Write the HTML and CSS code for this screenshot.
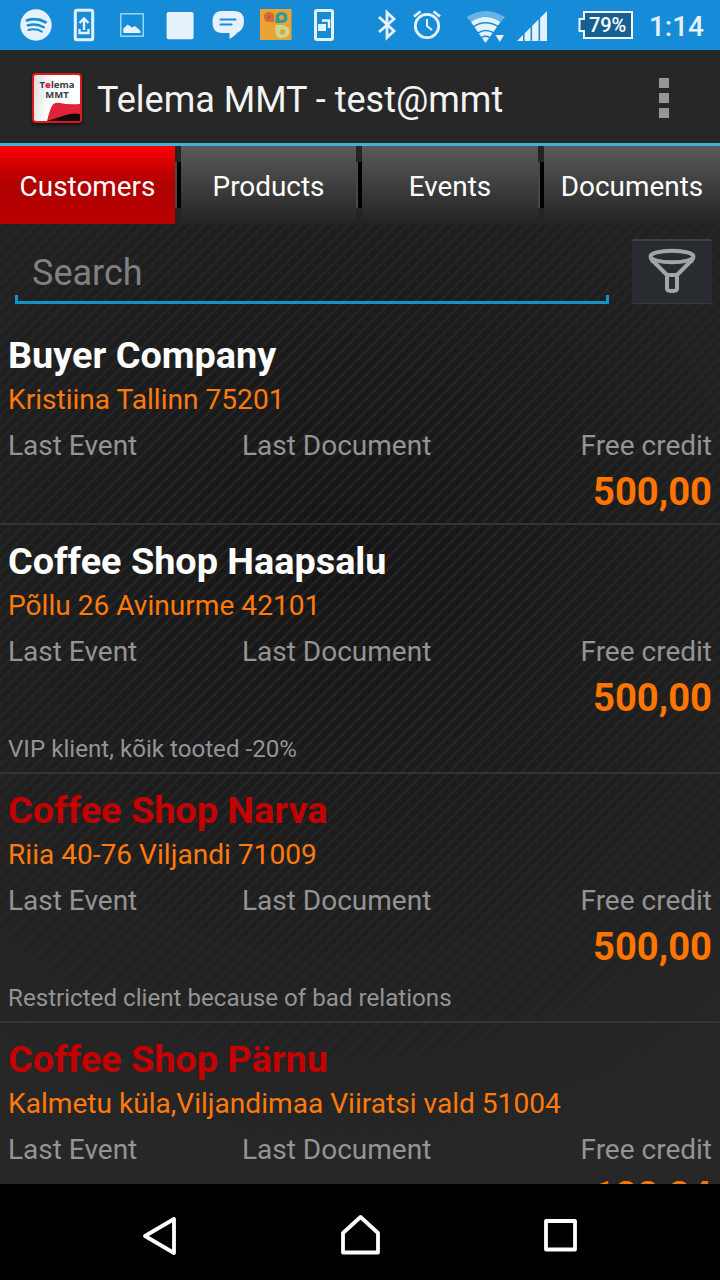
FILE: index.html
```html
<!DOCTYPE html>
<html lang="en">
<head>
  <meta charset="UTF-8" />
  <meta name="viewport" content="width=device-width, initial-scale=1.0" />
  <title>Telema MMT</title>
  <link rel="stylesheet" href="styles.css">
</head>
<body>
  <div class="statusbar">
    <div class="notifications">
      <svg viewBox="0 0 48 50"><circle cx="24" cy="25" r="15.7" fill="#e6f2fb"/><g fill="none" stroke="#168cd8" stroke-linecap="round"><path d="M15 20.3q10-3 18.5 2" stroke-width="2.8"/><path d="M15.7 25.3q9-2.4 16 2" stroke-width="2.4"/><path d="M16.3 30q8-2 13.5 1.6" stroke-width="2"/></g></svg>
      <svg viewBox="0 0 48 50"><rect x="15.300" y="10.300" width="17.400" height="29.400" rx="1.500" fill="none" stroke="#e6f2fb" stroke-width="3"/><path d="M24 30V18.500M19.500 23L24 18.500l4.500 4.500M19.500 29v4h9v-4" fill="none" stroke="#e6f2fb" stroke-width="2.400"/></svg>
      <svg viewBox="0 0 48 50"><rect x="12.800" y="13.800" width="22.400" height="22.400" fill="none" stroke="#a8e3f8" stroke-width="1.300"/><path d="M15.300 33v-4.500l4.500-4 4 3 3-1.500 5.500 4.500V33z" fill="#e6f2fb"/></svg>
      <svg viewBox="0 0 48 50"><rect x="10.600" y="12" width="27" height="27.300" rx="2" fill="#e6f2fb"/></svg>
      <svg viewBox="0 0 48 50"><path d="M18 11h12q10 0 10 10 0 9-6.500 11.500Q31 36 25.500 39v-6H18q-9.500 0-9.500-11T18 11z" fill="#e6f2fb"/><path d="M16.500 19.500h15M16.500 24.500h11" stroke="#168cd8" stroke-width="2" stroke-linecap="round"/></svg>
      <svg viewBox="0 0 48 50"><rect x="8" y="9" width="31.500" height="31" fill="#eaa233"/><path d="M12 16q1-4 5-4 5 0 5 5v5h-5q-5 0-5-6z" fill="#cf6d34"/><path d="M23.500 23v-5q0-6 6-6t6 5.500-6 5.500z" fill="#2b9c9b"/><circle cx="29.500" cy="17.500" r="2.500" fill="#eaa233"/><circle cx="17" cy="17.500" r="1.500" fill="#b95630"/><path d="M23.500 25h7q7 1 7 6.500t-7 6.500-7-6z" fill="#c5d995"/><circle cx="30.500" cy="32" r="2.800" fill="#eaa233"/></svg>
      <svg viewBox="0 0 48 50"><rect x="15.500" y="10.500" width="17" height="29" rx="1.500" fill="none" stroke="#e6f2fb" stroke-width="3"/><path d="M18 24h8v7h-8z" fill="#e6f2fb"/><path d="M22 20.500h7V28" fill="none" stroke="#e6f2fb" stroke-width="2.400"/></svg>
    </div>
    <div class="system">
      <svg class="bluetooth" viewBox="0 0 24 50"><path d="M4 17l15 14-7 6.500v-25L19 19 4 32" fill="none" stroke="#e6f2fb" stroke-width="2.800"/></svg>
      <svg class="alarm" viewBox="0 0 32 50"><circle cx="16" cy="26" r="11.700" fill="none" stroke="#e6f2fb" stroke-width="2.800"/><path d="M16 19v7l5 4" fill="none" stroke="#e6f2fb" stroke-width="2"/><path d="M3 16.500l6.500-5M29 16.500l-6.500-5" stroke="#e6f2fb" stroke-width="2.800"/></svg>
      <svg class="wifi" viewBox="0 0 42 50"><path d="M.5 17Q19.500 5 39 17l-4 5Q19.500 11.500 5 22z" fill="#67b3e7"/><path d="M5 22Q19.500 12 34.500 22L19.500 43z" fill="#e6f2fb"/><path d="M7 27q12.500-8.500 26 0M12 33q7.500-5 16 0M15.500 37.500q4-2.500 8 0" fill="none" stroke="#168cd8" stroke-width="1.600"/><path d="M28.500 32.500H40V44H28.500z" fill="#168cd8"/><path d="M29.500 35h8.500l-4.200 7z" fill="#e6f2fb"/></svg>
      <svg class="signal" viewBox="0 0 32 50"><path d="M0 41L30 11v30z" fill="#e6f2fb"/><path d="M6.800 10v32M14.300 10v32M22.300 10v32" stroke="#168cd8" stroke-width="1.600"/></svg>
      <div class="battery">
        <svg viewBox="0 0 56 50"><path d="M6 12h48v26H6v-7H1.500V19H6z" fill="#155f91" stroke="#f2f9fe" stroke-width="2"/></svg>
        <span>79%</span>
      </div>
      <span class="clock">1:14</span>
    </div>
  </div>

  <div class="header">
    <div class="logo">
      <svg viewBox="0 0 46 46"><path d="M13 46q3-12 5-15 2-4 8-3 8 2 20 1v17z" fill="#df2338"/><path d="M13 46q6-2 13-4 12-5 20-3v7z" fill="#160b0b"/></svg>
      <div class="logo-text">T<b>e</b>lema<br>MMT</div>
    </div>
    <h1>Telema MMT - test@mmt</h1>
    <div class="menu"><i></i><i></i><i></i></div>
  </div>

  <div class="tabs">
    <div class="tab active">Customers</div>
    <div class="divider"></div>
    <div class="tab">Products</div>
    <div class="divider"></div>
    <div class="tab">Events</div>
    <div class="divider"></div>
    <div class="tab">Documents</div>
  </div>

  <div class="content">
    <div class="searchbar">
      <div class="search"><span>Search</span></div>
      <div class="filter">
        <svg viewBox="0 0 48 48" fill="none" stroke="#a3a4a5" stroke-width="4" stroke-linejoin="round"><ellipse cx="24" cy="8.500" rx="21.500" ry="5.800"/><path d="M2.500 9.500q1 3 5 6L19 27v13.500q0 2.500 5 2.500t5-2.500V27l11.500-11.500q4-3 5-6M19 27h10"/></svg>
      </div>
    </div>

    <div class="customer">
      <div class="name">Buyer Company</div>
      <div class="address">Kristiina Tallinn 75201</div>
      <div class="labels"><span>Last Event</span><span>Last Document</span><span>Free credit</span></div>
      <div class="credit">500,00</div>
    </div>
    <div class="customer">
      <div class="name">Coffee Shop Haapsalu</div>
      <div class="address">Põllu 26 Avinurme 42101</div>
      <div class="labels"><span>Last Event</span><span>Last Document</span><span>Free credit</span></div>
      <div class="credit">500,00</div>
      <div class="note">VIP klient, kõik tooted -20%</div>
    </div>
    <div class="customer restricted">
      <div class="name">Coffee Shop Narva</div>
      <div class="address">Riia 40-76 Viljandi 71009</div>
      <div class="labels"><span>Last Event</span><span>Last Document</span><span>Free credit</span></div>
      <div class="credit">500,00</div>
      <div class="note">Restricted client because of bad relations</div>
    </div>
    <div class="customer restricted">
      <div class="name">Coffee Shop Pärnu</div>
      <div class="address">Kalmetu küla,Viljandimaa Viiratsi vald 51004</div>
      <div class="labels"><span>Last Event</span><span>Last Document</span><span>Free credit</span></div>
      <div class="credit">122,24</div>
    </div>
  </div>

  <div class="navbar">
    <svg viewBox="0 0 48 48"><path d="M38 8v34L9 25z"/></svg>
    <svg viewBox="0 0 48 48"><path d="M24.500 6L42 22v19.500H7V22z"/></svg>
    <svg viewBox="0 0 48 48"><path d="M10 10h29v28.500H10z"/></svg>
  </div>
</body>
</html>
```

FILE: styles.css
```css
* {
  box-sizing: border-box;
}
body {
  margin: 0;
  width: 720px;
  height: 1280px;
  display: flex;
  flex-direction: column;
  overflow: hidden;
  background: #262626;
  color: #fff;
  font-family: Roboto, sans-serif;
}
svg {
  display: block;
}

.statusbar {
  flex: none;
  height: 50px;
  display: flex;
  justify-content: space-between;
  padding: 0 16px 0 12px;
  background: #168cd8;
}
.notifications,
.system {
  display: flex;
}
.notifications svg {
  width: 48px;
  height: 50px;
}
.system svg {
  height: 50px;
}
.bluetooth {
  width: 24px;
  margin-right: 12px;
}
.alarm {
  width: 32px;
  margin-right: 23px;
}
.wifi {
  width: 42px;
  margin-right: 9px;
}
.signal {
  width: 32px;
  margin-right: 29px;
}
.battery {
  position: relative;
  width: 56px;
  margin-right: 15px;
}
.battery span {
  position: absolute;
  left: 11px;
  top: 0;
  font-size: 20px;
  font-weight: 500;
  line-height: 50px;
}
.clock {
  color: #e6f2fb;
  font-size: 28px;
  font-weight: 500;
  line-height: 53px;
}

.header {
  flex: none;
  height: 96px;
  display: flex;
  align-items: center;
  padding: 3px 50px 0 32px;
  background: #272727;
  border-bottom: 3px solid #41b1d8;
}
.logo {
  position: relative;
  width: 50px;
  height: 50px;
  border: 2px solid #d91b20;
  border-radius: 4px;
  background: linear-gradient(100deg, #ddd, #fff 40%);
  box-shadow: 0 2px 3px #111;
}
.logo-text {
  position: absolute;
  left: 0;
  right: 0;
  top: 5px;
  color: #383c46;
  font: bold 9.5px/10px "Noto Sans", sans-serif;
  text-align: center;
}
.logo-text b {
  color: #e02038;
}
h1 {
  flex: 1;
  margin: 0 0 0 15px;
  padding-top: 4px;
  color: #f3f3f3;
  font-size: 36px;
  font-weight: 400;
}
.menu {
  display: flex;
  flex-direction: column;
  gap: 5px;
  padding-right: 1px;
}
.menu i {
  width: 10px;
  height: 10px;
  background: #969696;
}

.tabs {
  flex: none;
  height: 78px;
  display: grid;
  grid-template-columns: 175px 6px 175px 6px 176px 6px 176px;
  background: #242424;
}
.tab {
  display: flex;
  align-items: center;
  justify-content: center;
  padding-top: 2px;
  background: linear-gradient(#5a5a5a, #232323);
  font-size: 27.9px;
}
.tab.active {
  background: linear-gradient(#ff0000, #c40000 33%, #b00000 50%, #b80000);
}
.divider {
  margin: 16px 0;
  background: linear-gradient(90deg, #484848 2px, #000 2px);
}

/* diagonal stripes that fade out towards the edges */
.content {
  flex: 1;
  min-height: 0;
  overflow: hidden;
  background:
    radial-gradient(circle at 340px 330px, rgba(39, 39, 39, 0), rgba(39, 39, 39, 0.5) 330px, #272727 640px),
    repeating-linear-gradient(135deg, rgba(255, 255, 255, 0.055) 0 1.5px, transparent 2.5px 7.5px, rgba(255, 255, 255, 0.055) 8.485px),
    #151515;
}
.searchbar {
  height: 95px;
  display: flex;
  justify-content: space-between;
  padding: 15px 8px 0 15px;
}
.search {
  width: 594px;
  height: 65px;
  padding-left: 17px;
  background:
    linear-gradient(#1094c4, #1094c4) 0 100% / 100% 3px no-repeat,
    linear-gradient(#1094c4, #1094c4) 0 100% / 3px 9px no-repeat,
    linear-gradient(#1094c4, #1094c4) 100% 100% / 3px 9px no-repeat;
  color: #808080;
  font-size: 36px;
  line-height: 69px;
}
.filter {
  width: 80px;
  height: 65px;
  padding: 7px 16px;
  background: #282c30;
  border-top: 2px solid #3c4043;
  border-bottom: 1px solid #363a3d;
  border-radius: 2px;
}

.customer {
  padding: 13px 8px 11px;
  border-bottom: 2px solid #343434;
}
.name {
  font-size: 37.8px;
  font-weight: 700;
  line-height: 47px;
}
.restricted .name {
  color: #c40000;
}
.address {
  color: #ff7a0a;
  font-size: 28.1px;
  line-height: 41px;
}
.labels {
  display: grid;
  grid-template-columns: 234px 1fr 1fr;
  color: #949494;
  font-size: 28px;
  line-height: 52px;
}
.labels span:last-child {
  text-align: right;
}
.credit {
  color: #ff7500;
  font-size: 38.2px;
  font-weight: 700;
  line-height: 40px;
  text-align: right;
}
.note {
  margin-top: 19px;
  margin-bottom: -1px;
  color: #949494;
  font-size: 24.15px;
  line-height: 25px;
}

.navbar {
  flex: none;
  height: 96px;
  display: flex;
  align-items: center;
  justify-content: space-between;
  padding: 6px 136px 0;
  background: #000;
}
.navbar svg {
  width: 48px;
  height: 48px;
  fill: none;
  stroke: #fff;
  stroke-width: 3.800;
  stroke-linejoin: round;
}
```
